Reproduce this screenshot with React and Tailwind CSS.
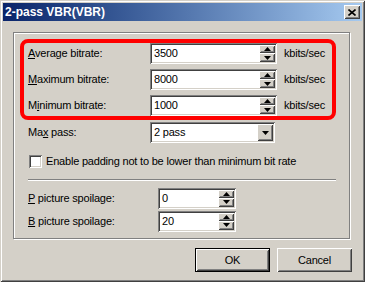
import React from 'react'

const sunken =
  'shadow-[inset_1px_1px_#808080,inset_-1px_-1px_#fff,inset_2px_2px_#404040,inset_-2px_-2px_#d4d0c8]'
const raised =
  'shadow-[inset_1px_1px_#fff,inset_-1px_-1px_#404040,inset_2px_2px_#d4d0c8,inset_-2px_-2px_#808080]'

function Arrow({ up }) {
  return (
    <svg width="7" height="4" viewBox="0 0 7 4">
      <polygon points={up ? '3.5,0 7,4 0,4' : '0,0 7,0 3.5,4'} fill="#000" />
    </svg>
  )
}

// spin box with the little up/down buttons on the right
function Spin({ value, className }) {
  return (
    <div className={`flex h-[21px] bg-white p-[2px] ${sunken} ${className}`}>
      <div className="flex-1 pl-[2px] leading-[17px]">{value}</div>
      <div className="flex w-[16px] flex-col">
        <div className={`flex h-[8px] items-center justify-center bg-[#d4d0c8] ${raised}`}>
          <Arrow up />
        </div>
        <div className={`flex h-[9px] items-center justify-center bg-[#d4d0c8] ${raised}`}>
          <Arrow />
        </div>
      </div>
    </div>
  )
}

function Row({ label, value }) {
  return (
    <div className="flex h-[21px] items-center pl-[4px]">
      <span className="w-[122px]">{label}</span>
      <Spin value={value} className="w-[127px]" />
      <span className="ml-[7px]">kbits/sec</span>
    </div>
  )
}

export default function App() {
  return (
    <div
      className="flex h-[282px] w-[365px] flex-col bg-[#d4d0c8] p-[3px] text-[11px] tracking-[-0.2px] text-black shadow-[inset_1px_1px_#d4d0c8,inset_-1px_-1px_#404040,inset_2px_2px_#fff,inset_-2px_-2px_#808080]"
      style={{ fontFamily: '"Liberation Sans", Arial, sans-serif' }}
    >
      {/* title bar */}
      <div className="flex h-[18px] items-center justify-between bg-gradient-to-r from-[#0a246a] to-[#a6caf0] pl-[2px] pr-[2px]">
        <span className="text-[12px] font-bold tracking-normal text-white">2-pass VBR(VBR)</span>
        <div className={`flex h-[14px] w-[16px] items-center justify-center bg-[#d4d0c8] ${raised}`}>
          <svg width="8" height="7" viewBox="0 0 8 7">
            <path d="M0.5 0.5 L7.5 6.5 M7.5 0.5 L0.5 6.5" stroke="#000" strokeWidth="1.6" />
          </svg>
        </div>
      </div>

      {/* group box */}
      <div className="ml-[10px] mt-[11px] flex h-[207px] w-[337px] flex-col border border-[#808080] pl-[6px] shadow-[1px_1px_0_#fff,inset_1px_1px_0_#fff]">
        <div className="mt-[6px] flex w-[316px] flex-col gap-[5px] rounded-[8px] border-4 border-[#ff0000]">
          <Row label={<><u>A</u>verage bitrate:</>} value="3500" />
          <Row label={<><u>M</u>aximum bitrate:</>} value="8000" />
          <Row label={<>M<u>i</u>nimum bitrate:</>} value="1000" />
        </div>

        <div className="mt-[2px] flex h-[21px] items-center pl-[8px]">
          <span className="w-[122px]">Ma<u>x</u> pass:</span>
          <div className={`flex h-[21px] w-[125px] bg-white p-[2px] ${sunken}`}>
            <div className="flex-1 pl-[2px] leading-[17px]">2 pass</div>
            <div className={`flex w-[16px] items-center justify-center bg-[#d4d0c8] ${raised}`}>
              <Arrow />
            </div>
          </div>
        </div>

        <label className="ml-[9px] mt-[10px] flex items-center">
          <span className={`h-[13px] w-[13px] bg-white ${sunken}`} />
          <span className="ml-[4px]">Enable padding not to be lower than minimum bit rate</span>
        </label>

        <div className="ml-[8px] mt-[9px] w-[308px] border-t border-b border-t-[#808080] border-b-white" />

        <div className="mt-[7px] flex flex-col gap-[2px] pl-[8px]">
          <div className="flex h-[21px] items-center">
            <span className="w-[130px]"><u>P</u> picture spoilage:</span>
            <Spin value="0" className="w-[78px]" />
          </div>
          <div className="flex h-[21px] items-center">
            <span className="w-[130px]"><u>B</u> picture spoilage:</span>
            <Spin value="20" className="w-[78px]" />
          </div>
        </div>
      </div>

      {/* buttons */}
      <div className="mt-[9px] flex justify-end gap-[7px] pr-[10px]">
        <button className="h-[24px] w-[75px] border border-black bg-[#d4d0c8] p-0">
          <div className={`flex h-full w-full items-center justify-center ${raised}`}>OK</div>
        </button>
        <button className={`h-[24px] w-[75px] bg-[#d4d0c8] ${raised}`}>Cancel</button>
      </div>
    </div>
  )
}
